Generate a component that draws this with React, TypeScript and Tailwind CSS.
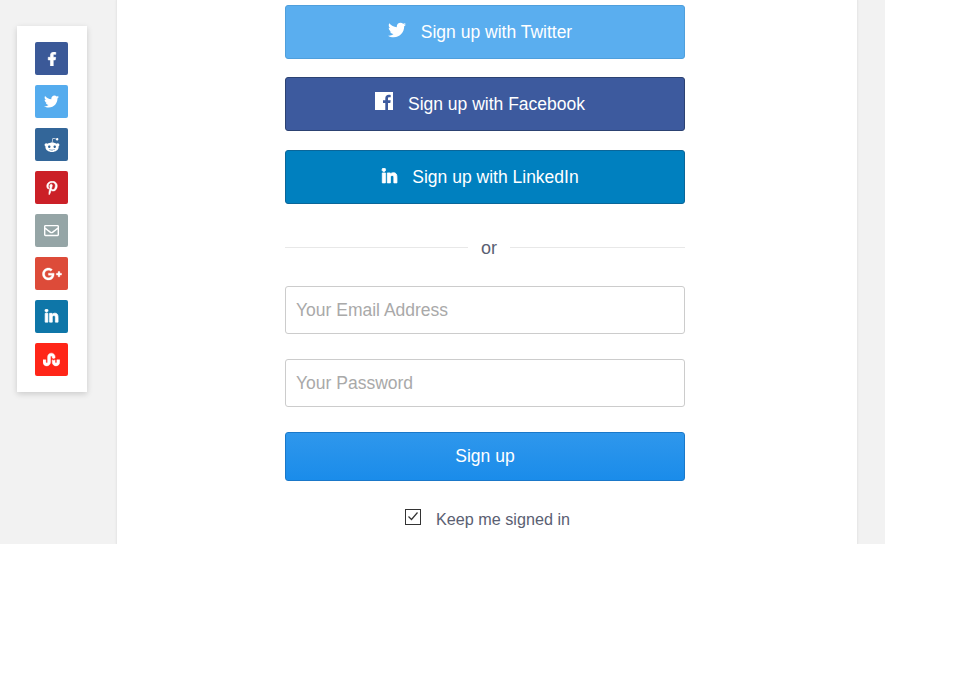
import { FaTwitter, FaFacebookF, FaRedditAlien, FaPinterestP, FaRegEnvelope, FaGooglePlusG, FaLinkedinIn, FaStumbleupon } from "react-icons/fa";
import type { ReactNode } from "react";

const shares: { bg: string; icon: ReactNode }[] = [
  { bg: "bg-[#3b5998]", icon: <FaFacebookF className="text-[14px]" stroke="currentColor" strokeWidth={24} /> },
  { bg: "bg-[#55acee]", icon: <FaTwitter className="text-[15px]" /> },
  { bg: "bg-[#336699]", icon: <FaRedditAlien className="text-[16px]" /> },
  { bg: "bg-[#cb2027]", icon: <FaPinterestP className="text-[14px]" stroke="currentColor" strokeWidth={20} /> },
  { bg: "bg-[#95a5a6]", icon: <FaRegEnvelope className="text-[15px]" /> },
  { bg: "bg-[#dd4b39]", icon: <FaGooglePlusG className="text-[20px]" stroke="currentColor" strokeWidth={10} /> },
  { bg: "bg-[#0e76a8]", icon: <FaLinkedinIn className="text-[15px]" stroke="currentColor" strokeWidth={24} /> },
  { bg: "bg-[#ff2618]", icon: <FaStumbleupon className="text-[17px]" stroke="currentColor" strokeWidth={14} /> },
];

function SocialButton({ cls, icon, label, gap = "ml-[15px]" }: { cls: string; icon: ReactNode; label: string; gap?: string }) {
  return (
    <button className={`flex h-[54px] w-full items-center justify-center rounded-[3px] border pr-[10px] text-[17.5px] text-white ${cls}`}>
      <span className="relative top-[-2px]">{icon}</span>
      <span className={gap}>{label}</span>
    </button>
  );
}

export default function App() {
  return (
    <div className="h-[678px] w-[978px] bg-white font-['Liberation_Sans',Arial,sans-serif]">
      <div className="flex h-[544px] w-[885px] overflow-hidden bg-[#f2f2f2]">
        <aside className="ml-[17px] mt-[26px] flex h-[366px] w-[70px] flex-col items-start gap-[10px] bg-white pl-[18px] pt-[16px] shadow-[0_2px_6px_rgba(0,0,0,0.16)]">
          {shares.map((s, i) => (
            <div key={i} className={`flex h-[33px] w-[33px] items-center justify-center rounded-[2px] text-white ${s.bg}`}>
              {s.icon}
            </div>
          ))}
        </aside>
        <main className="ml-[29px] flex h-[544px] w-[742px] flex-col items-center border-x border-[#e8e8e8] bg-white pt-[5px] shadow-[0_0_2px_rgba(0,0,0,0.06)]">
          <div className="ml-[-4px] flex w-[400px] flex-col">
            <SocialButton
              cls="border-[#4f9fdc] bg-[#5aaeef]"
              label="Sign up with Twitter"
              icon={<FaTwitter className="text-[18px]" />}
            />
            <div className="mt-[18px]">
              <SocialButton
                cls="border-[#2c4272] bg-[#3d5a9e]"
                label="Sign up with Facebook"
                icon={
                  <svg className="relative top-[-1px]" width="18" height="18" viewBox="0 0 18 18" fill="currentColor">
                    <path d="M0 0h18v18h-5v-7h2.3l.4-2.7H13V6.6c0-.8.2-1.3 1.3-1.3h1.4V2.9c-.3 0-1.1-.1-2-.1-2 0-3.4 1.2-3.4 3.5v2H8V11h2.3v7H0z" />
                  </svg>
                }
              />
            </div>
            <div className="mt-[19px]">
              <SocialButton
                cls="border-[#0a6699] bg-[#0080bf]"
                gap="ml-[14px]"
                label="Sign up with LinkedIn"
                icon={<FaLinkedinIn className="relative top-[1px] text-[17px]" stroke="currentColor" strokeWidth={24} />}
              />
            </div>
            <div className="mt-[33px] flex h-[21px] items-center">
              <div className="h-px w-[183px] bg-[#e8e8e8]" />
              <span className="px-[13px] pt-[2px] text-[18px] leading-[21px] text-[#5a6072]">or</span>
              <div className="h-px flex-1 bg-[#e8e8e8]" />
            </div>
            <input
              placeholder="Your Email Address"
              className="mt-[28px] h-[48px] w-full rounded-[3px] border border-[#cccccc] bg-white px-[10px] text-[17.5px] placeholder:text-[#a9a9a9]"
            />
            <input
              placeholder="Your Password"
              className="mt-[25px] h-[48px] w-full rounded-[3px] border border-[#cccccc] bg-white px-[10px] text-[17.5px] placeholder:text-[#a9a9a9]"
            />
            <button className="mt-[25px] h-[49px] w-full rounded-[3px] border border-[#1a78c9] bg-[linear-gradient(#2f97ec,#1a8cea)] text-[17.5px] text-white">
              Sign up
            </button>
            <label className="mt-[28px] flex items-start justify-center pl-[5px] text-[16.2px] text-[#5a6072]">
              <span className="flex h-[16px] w-[16px] items-start justify-center border border-[#333333] bg-white">
                <svg className="mt-px" width="12" height="11" viewBox="0 0 12 11" fill="none" stroke="#333" strokeWidth="1.2">
                  <path d="M1.5 5.5 L4.5 8.5 L10.5 1.5" />
                </svg>
              </span>
              <span className="ml-[15px] mt-[-2px]">Keep me signed in</span>
            </label>
          </div>
        </main>
      </div>
    </div>
  );
}
